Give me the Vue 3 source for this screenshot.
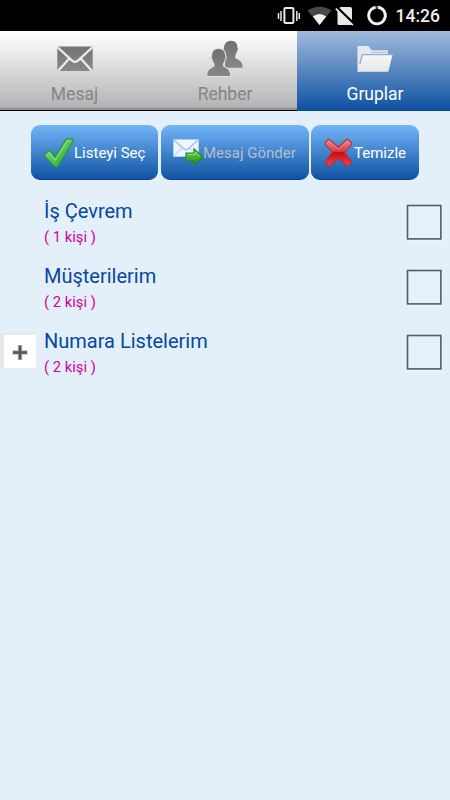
<script setup>
const groups = [
  { name: 'İş Çevrem', count: 1, expandable: false },
  { name: 'Müşterilerim', count: 2, expandable: false },
  { name: 'Numara Listelerim', count: 2, expandable: true },
]
</script>

<template>
  <div class="screen">
    <header class="status">
      <svg class="status-icons" width="120" height="31" viewBox="0 0 120 31">
        <g fill="none" stroke="#e8e8e8">
          <rect x="14.4" y="8" width="9" height="15" rx="1" stroke-width="2" />
          <path d="M11 11v10M26.800 11v10" stroke-width="1.500" />
          <path d="M8.500 13v6M29.300 13v6" stroke-width="1.500" />
        </g>
        <path d="M37.500 10.5Q49.500 3 61.500 10.5L49.500 25Z" fill="#484848" />
        <path d="M42.9 16.6Q49.500 11.4 56.3 16.6L49.500 25Z" fill="#f2f2f2" />
        <path d="M70.5 7H80q2 0 2 2v14.500q0 1.500-1.500 1.500H69q-1.500 0-1.500-1.500V10.200Z" fill="#e8e8e8" />
        <path d="M67.500 8L85 25" stroke="#000" stroke-width="2.800" />
        <path d="M65.800 8.700L82.800 25.200" stroke="#e8e8e8" stroke-width="1.700" />
        <circle cx="107" cy="15.500" r="8.300" fill="none" stroke="#555" stroke-width="2.800" />
        <path d="M108 7.260A8.300 8.300 0 1 1 105.500 7.340" fill="none" stroke="#f2f2f2" stroke-width="2.800" />
      </svg>
      <span class="clock">14:26</span>
    </header>

    <nav class="tabs">
      <div class="tab">
        <svg class="tab-icon" width="40" height="40" viewBox="0 0 40 40">
          <defs>
            <linearGradient id="mail" x1="0" y1="0" x2="0" y2="1">
              <stop offset="0" stop-color="#747474" />
              <stop offset="1" stop-color="#888" />
            </linearGradient>
          </defs>
          <rect x="2.300" y="10.500" width="35.400" height="24.500" fill="url(#mail)" />
          <path d="M2.300 11L16.500 24.200Q20 27.500 23.500 24.200L37.700 11M3 35L14.300 22.500M37 35L25.700 22.500" fill="none" stroke="#ececec" stroke-width="2.300" />
        </svg>
        <span class="tab-label">Mesaj</span>
      </div>
      <div class="tab contacts">
        <svg class="tab-icon" width="40" height="41" viewBox="0 0 40 41">
          <defs>
            <linearGradient id="person" x1="0" y1="0" x2="0" y2="1">
              <stop offset="0" stop-color="#707070" />
              <stop offset="1" stop-color="#888" />
            </linearGradient>
          </defs>
          <path d="M25.800 4.700c4.600 0 6.800 2.800 6.600 7.300.9.300.5 2.700-.5 3.100-.3 1.900-.9 3.200-1.700 4.200v2.600c3.200 2.400 7.500 2.400 7.500 9.800H20V19.500l-1-4.500C18.300 8.500 21 4.700 25.800 4.700Z" fill="url(#person)" />
          <path d="M13.500 13c4.600 0 6.800 2.800 6.600 7.300.9.300.5 2.700-.5 3.100-.3 1.900-.9 3.200-1.700 4.200v2.600c3.200 2.400 7.300 2.400 7.300 9.800H2.300c0-7.400 4.200-7.400 7.200-9.800v-2.600c-.8-1-1.500-2.300-1.800-4.200-1-.4-1.400-2.800-.5-3.100C7 15.800 9.100 13 13.500 13Z" fill="url(#person)" stroke="#e0e0e0" stroke-width="2.200" paint-order="stroke" />
        </svg>
        <span class="tab-label">Rehber</span>
      </div>
      <div class="tab active">
        <svg class="tab-icon" width="40" height="40" viewBox="0 0 40 40">
          <defs>
            <linearGradient id="folder" x1="0" y1="0" x2="0" y2="1">
              <stop offset="0" stop-color="#f7f7f7" />
              <stop offset="1" stop-color="#e6e7e9" />
            </linearGradient>
          </defs>
          <g transform="translate(0 1.200)">
            <path d="M2.500 8.700H13.500l3 4.300H33v8L5 34.500H2.500Z" fill="#e6e8ea" />
            <path d="M16.500 15.200H32.800" stroke="#a9bfdc" stroke-width="1" />
            <path d="M7.500 17.500H37.500l-4.200 17H2.800Z" fill="url(#folder)" />
            <path d="M4.800 27L7.300 17.500H37.800" fill="none" stroke="#8fafd8" stroke-width="1.300" />
          </g>
        </svg>
        <span class="tab-label">Gruplar</span>
      </div>
    </nav>

    <div class="toolbar">
      <button class="action select">
        <svg width="32" height="34" viewBox="0 0 32 34">
          <defs>
            <linearGradient id="check" x1="0" y1="0" x2="1" y2="1">
              <stop offset="0" stop-color="#8bdc83" />
              <stop offset=".5" stop-color="#55c454" />
              <stop offset="1" stop-color="#239e2b" />
            </linearGradient>
          </defs>
          <path d="M1.800 18.500L5.500 15.300Q7 14.700 8 15.800L12 21L22.700 3.700Q24 2.200 26 2.500L29.500 3.200Q30.500 4 29.700 5.700L15.400 29.700Q13.300 32.200 11.500 30.300L2 20.300Q1.200 19.300 1.800 18.500Z" fill="url(#check)" stroke="#2f9440" stroke-width="1.200" />
          <path d="M4 18.800L6.500 17L12.300 24.200L24.500 5L28 5.300" fill="none" stroke="#9de492" stroke-width="1.200" opacity=".65" />
        </svg>
        <span>Listeyi Seç</span>
      </button>
      <button class="action send">
        <svg width="32" height="34" viewBox="0 0 32 34">
          <defs>
            <linearGradient id="arrow" x1="0" y1="0" x2="0" y2="1">
              <stop offset="0" stop-color="#75d64c" />
              <stop offset="1" stop-color="#189115" />
            </linearGradient>
          </defs>
          <rect x="1.500" y="3.500" width="25" height="17" fill="#edf6ff" stroke="#a9cff4" />
          <path d="M2 20L10.500 11.500M26 20L17.500 11.500" fill="none" stroke="#bfdcf7" stroke-width="1.200" />
          <path d="M2 4L11.800 12.800Q14 14.500 16.200 12.800L26 4" fill="none" stroke="#9fc5e9" stroke-width="1.500" />
          <path d="M14 17H22V12.800L30.800 21L22 29V25H14Z" fill="url(#arrow)" stroke="#168c20" stroke-width="1.100" />
          <path d="M15.500 18.500H23.300V16L28 20.500" fill="none" stroke="#a6e87f" stroke-width=".8" />
        </svg>
        <span>Mesaj Gönder</span>
      </button>
      <button class="action clear">
        <svg width="32" height="34" viewBox="0 0 32 34">
          <defs>
            <linearGradient id="cross" x1="0" y1="0" x2="0" y2="1">
              <stop offset="0" stop-color="#e98b8d" />
              <stop offset=".45" stop-color="#dc3d40" />
              <stop offset=".5" stop-color="#c90b0e" />
              <stop offset="1" stop-color="#e54a4d" />
            </linearGradient>
          </defs>
          <path d="M6.500 3.500L15.500 11L23.700 3.500Q24.800 3 25.800 4L28.500 6.800Q29.200 7.900 28.300 8.700L21.500 16.500L28.300 25Q29 26 28.300 26.900L25.500 29.700Q24.500 30.400 23.500 29.500L15.500 22.500L7 29.700Q6 30.400 5 29.500L2.300 26.700Q1.500 25.700 2.500 24.700L9.500 16.500L2.300 8.700Q1.500 7.700 2.400 6.700L4.500 4.100Q5.500 3 6.500 3.500Z" fill="url(#cross)" stroke="#b5303f" stroke-width="1.100" />
          <path d="M4 7.500L6 5.500L15.500 13.500L24.500 5.500L26.500 7.500" fill="none" stroke="#f4b1b3" stroke-width="1" opacity=".4" />
        </svg>
        <span>Temizle</span>
      </button>
    </div>

    <main class="groups">
      <div v-for="group in groups" :key="group.name" class="row">
        <div class="gutter">
          <div v-if="group.expandable" class="expander">
            <svg width="36" height="36" viewBox="0 0 36 36">
              <path d="M20 12v15M12.500 19.500h15" stroke="#bbb" stroke-width="4.500" />
              <path d="M20 12.500v14M13 19.500h14" stroke="#555" stroke-width="2.600" />
            </svg>
          </div>
        </div>
        <div class="details">
          <div class="name">{{ group.name }}</div>
          <div class="count">( {{ group.count }} kişi )</div>
        </div>
        <svg class="checkbox" width="37" height="37" viewBox="0 0 37 37">
          <rect x=".5" y=".5" width="36" height="36" fill="none" stroke="#eef5f8" />
          <rect x="1.500" y="1.500" width="33.400" height="33.400" fill="#e6f1fc" stroke="#555b5f" stroke-width="1.600" />
        </svg>
      </div>
    </main>
  </div>
</template>

<style>
body { margin: 0; }
</style>

<style scoped>
.screen {
  width: 450px;
  height: 800px;
  overflow: hidden;
  background: #e3eff9;
  font-family: Roboto, "Liberation Sans", sans-serif;
}
.status {
  display: flex;
  justify-content: flex-end;
  height: 31px;
  background: #000;
}
.status-icons { flex: none; }
.clock {
  width: 60px;
  padding-left: 5.500px;
  color: #eee;
  font-size: 17.500px;
  font-weight: 500;
  line-height: 33px;
  box-sizing: border-box;
}
.tabs {
  display: grid;
  grid-template-columns: 149px 148px 153px;
  height: 80px;
}
.tab {
  display: flex;
  flex-direction: column;
  align-items: center;
  box-sizing: border-box;
  padding-top: 5px;
  color: #858585;
  background: linear-gradient(#fff 0, #fdfdfd 5%, #b4b4b6 96%, #929294 98%);
  border-bottom: 1px solid #000;
}
.contacts { padding-left: 4px; }
.contacts .tab-label { margin-top: 6px; }
.active {
  color: #fff;
  background: linear-gradient(#a0bbdc, #0e51a2);
  border-bottom-color: #0b469a;
  padding-left: 3px;
}
.tab-icon { flex: none; }
.tab-label {
  font-size: 17.500px;
  line-height: 22px;
  margin-top: 7px;
}
.toolbar {
  display: flex;
  gap: 3px;
  padding: 14px 31px 0;
}
.action {
  display: flex;
  align-items: center;
  box-sizing: border-box;
  flex: none;
  height: 55px;
  padding: 0 0 0 12px;
  border: 0;
  border-bottom: 1px solid #08409a;
  border-radius: 9px;
  background: linear-gradient(#73b5f8, #1053a2);
  color: #fff;
  font-family: inherit;
  font-size: 15px;
  white-space: nowrap;
}
.action svg { flex: none; margin: 2px -1px 0 0; }
.action span { padding-top: 2px; }
.select { width: 127px; }
.send { width: 148px; padding-left: 11px; color: #b6bdc8; }
.clear { width: 108px; margin-left: -1px; }
.groups { padding-top: 12px; }
.row {
  display: flex;
  height: 65px;
}
.gutter { width: 44px; flex: none; }
.expander {
  width: 37px;
  height: 36px;
  margin-top: 11px;
  box-sizing: border-box;
  border-left: 4px solid #e5e7e9;
  border-top: 2px solid #e9ecef;
  border-right: 1px solid #edf2f7;
  border-bottom: 1px solid #edf2f7;
  background: #fff;
}
.expander svg { display: block; margin: -2px 0 0 -4px; }
.details { flex: 1; padding-top: 6px; }
.name {
  color: #0747a1;
  font-size: 20px;
  line-height: 26px;
}
.count {
  color: #d3009b;
  font-size: 14.800px;
  line-height: 26px;
}
.checkbox { flex: none; margin: 12px 7px 0 0; }
</style>
